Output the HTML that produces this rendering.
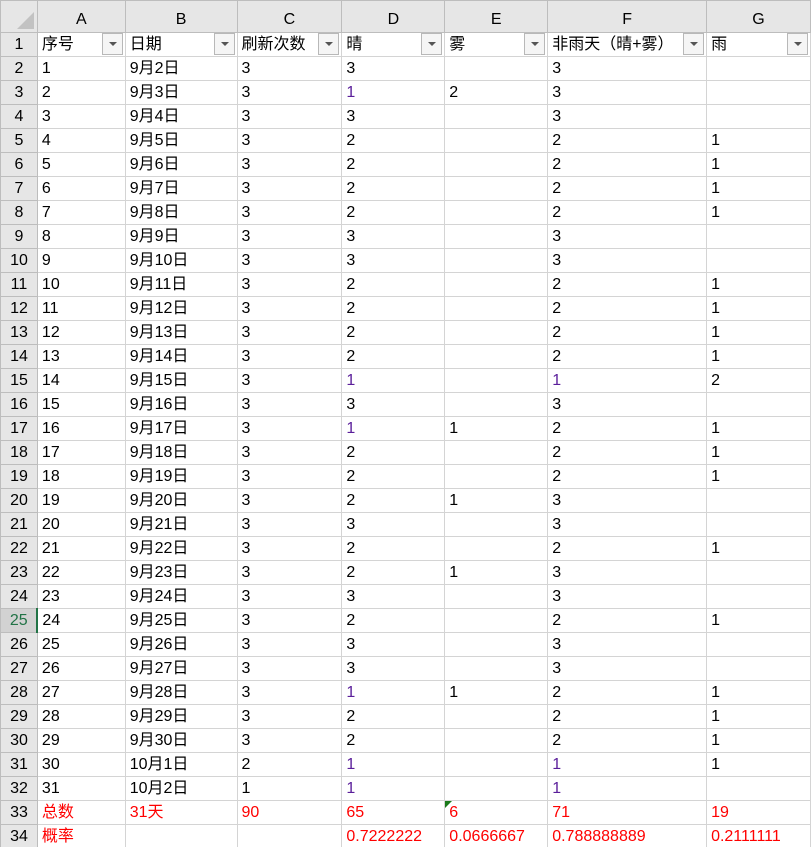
<!DOCTYPE html>
<html><head><meta charset="utf-8">
<style>
html,body{margin:0;padding:0;background:#fff;width:811px;height:847px;overflow:hidden}
table{border-collapse:collapse;table-layout:fixed;font-family:"Liberation Sans","Noto Sans CJK SC",sans-serif;font-size:16px;color:#000}
td{border:1px solid #d4d4d4;height:24px;padding:0 0 0 4px;white-space:nowrap;overflow:hidden;line-height:23px;box-sizing:border-box}
tr.h td{background:#e6e6e6;height:32px;text-align:center;padding:6px 0 0 0;border-color:#bdbdbd;font-size:16px;line-height:25px}
td.r{background:#e6e6e6;text-align:center;padding:0;border-color:#bdbdbd}
td.sel{background:#d2d2d2;color:#217346;border-right:2px solid #217346}
.p{color:#5a1e9a}
tr.red td{color:#ff0000}
tr.red td.r{color:#000}
.f{position:relative}
.f span.b{position:absolute;right:2px;top:0px;width:21px;height:22px;border:1px solid #b8b8b8;background:#f5f5f5;box-sizing:border-box}
.f span.b:after{content:"";position:absolute;left:6px;top:8px;border-left:4px solid transparent;border-right:4px solid transparent;border-top:4px solid #555}
.corner{position:relative}
.corner:after{content:"";position:absolute;right:3px;bottom:3px;border-left:17px solid transparent;border-bottom:17px solid #c2c2c2}
.tri{position:relative}
.tri:before{content:"";position:absolute;left:0;top:0;border-right:7px solid transparent;border-top:7px solid #1a7a1a}
</style></head><body>
<table>
<colgroup><col style="width:37px"><col style="width:88px"><col style="width:112px"><col style="width:105px"><col style="width:103px"><col style="width:103px"><col style="width:159px"><col style="width:104px"></colgroup>
<tr class="h"><td class="corner"></td><td>A</td><td>B</td><td>C</td><td>D</td><td>E</td><td>F</td><td>G</td></tr>
<tr><td class="r">1</td><td class="f">序号<span class="b"></span></td><td class="f">日期<span class="b"></span></td><td class="f">刷新次数<span class="b"></span></td><td class="f">晴<span class="b"></span></td><td class="f">雾<span class="b"></span></td><td class="f">非雨天（晴+雾）<span class="b"></span></td><td class="f">雨<span class="b"></span></td></tr>
<tr><td class="r">2</td><td>1</td><td>9月2日</td><td>3</td><td>3</td><td></td><td>3</td><td></td></tr>
<tr><td class="r">3</td><td>2</td><td>9月3日</td><td>3</td><td class="p">1</td><td>2</td><td>3</td><td></td></tr>
<tr><td class="r">4</td><td>3</td><td>9月4日</td><td>3</td><td>3</td><td></td><td>3</td><td></td></tr>
<tr><td class="r">5</td><td>4</td><td>9月5日</td><td>3</td><td>2</td><td></td><td>2</td><td>1</td></tr>
<tr><td class="r">6</td><td>5</td><td>9月6日</td><td>3</td><td>2</td><td></td><td>2</td><td>1</td></tr>
<tr><td class="r">7</td><td>6</td><td>9月7日</td><td>3</td><td>2</td><td></td><td>2</td><td>1</td></tr>
<tr><td class="r">8</td><td>7</td><td>9月8日</td><td>3</td><td>2</td><td></td><td>2</td><td>1</td></tr>
<tr><td class="r">9</td><td>8</td><td>9月9日</td><td>3</td><td>3</td><td></td><td>3</td><td></td></tr>
<tr><td class="r">10</td><td>9</td><td>9月10日</td><td>3</td><td>3</td><td></td><td>3</td><td></td></tr>
<tr><td class="r">11</td><td>10</td><td>9月11日</td><td>3</td><td>2</td><td></td><td>2</td><td>1</td></tr>
<tr><td class="r">12</td><td>11</td><td>9月12日</td><td>3</td><td>2</td><td></td><td>2</td><td>1</td></tr>
<tr><td class="r">13</td><td>12</td><td>9月13日</td><td>3</td><td>2</td><td></td><td>2</td><td>1</td></tr>
<tr><td class="r">14</td><td>13</td><td>9月14日</td><td>3</td><td>2</td><td></td><td>2</td><td>1</td></tr>
<tr><td class="r">15</td><td>14</td><td>9月15日</td><td>3</td><td class="p">1</td><td></td><td class="p">1</td><td>2</td></tr>
<tr><td class="r">16</td><td>15</td><td>9月16日</td><td>3</td><td>3</td><td></td><td>3</td><td></td></tr>
<tr><td class="r">17</td><td>16</td><td>9月17日</td><td>3</td><td class="p">1</td><td>1</td><td>2</td><td>1</td></tr>
<tr><td class="r">18</td><td>17</td><td>9月18日</td><td>3</td><td>2</td><td></td><td>2</td><td>1</td></tr>
<tr><td class="r">19</td><td>18</td><td>9月19日</td><td>3</td><td>2</td><td></td><td>2</td><td>1</td></tr>
<tr><td class="r">20</td><td>19</td><td>9月20日</td><td>3</td><td>2</td><td>1</td><td>3</td><td></td></tr>
<tr><td class="r">21</td><td>20</td><td>9月21日</td><td>3</td><td>3</td><td></td><td>3</td><td></td></tr>
<tr><td class="r">22</td><td>21</td><td>9月22日</td><td>3</td><td>2</td><td></td><td>2</td><td>1</td></tr>
<tr><td class="r">23</td><td>22</td><td>9月23日</td><td>3</td><td>2</td><td>1</td><td>3</td><td></td></tr>
<tr><td class="r">24</td><td>23</td><td>9月24日</td><td>3</td><td>3</td><td></td><td>3</td><td></td></tr>
<tr><td class="r sel">25</td><td>24</td><td>9月25日</td><td>3</td><td>2</td><td></td><td>2</td><td>1</td></tr>
<tr><td class="r">26</td><td>25</td><td>9月26日</td><td>3</td><td>3</td><td></td><td>3</td><td></td></tr>
<tr><td class="r">27</td><td>26</td><td>9月27日</td><td>3</td><td>3</td><td></td><td>3</td><td></td></tr>
<tr><td class="r">28</td><td>27</td><td>9月28日</td><td>3</td><td class="p">1</td><td>1</td><td>2</td><td>1</td></tr>
<tr><td class="r">29</td><td>28</td><td>9月29日</td><td>3</td><td>2</td><td></td><td>2</td><td>1</td></tr>
<tr><td class="r">30</td><td>29</td><td>9月30日</td><td>3</td><td>2</td><td></td><td>2</td><td>1</td></tr>
<tr><td class="r">31</td><td>30</td><td>10月1日</td><td>2</td><td class="p">1</td><td></td><td class="p">1</td><td>1</td></tr>
<tr><td class="r">32</td><td>31</td><td>10月2日</td><td>1</td><td class="p">1</td><td></td><td class="p">1</td><td></td></tr>
<tr class="red"><td class="r">33</td><td>总数</td><td>31天</td><td>90</td><td>65</td><td class="tri">6</td><td>71</td><td>19</td></tr>
<tr class="red"><td class="r">34</td><td>概率</td><td></td><td></td><td>0.7222222</td><td>0.0666667</td><td>0.788888889</td><td>0.2111111</td></tr>
</table>
</body></html>
